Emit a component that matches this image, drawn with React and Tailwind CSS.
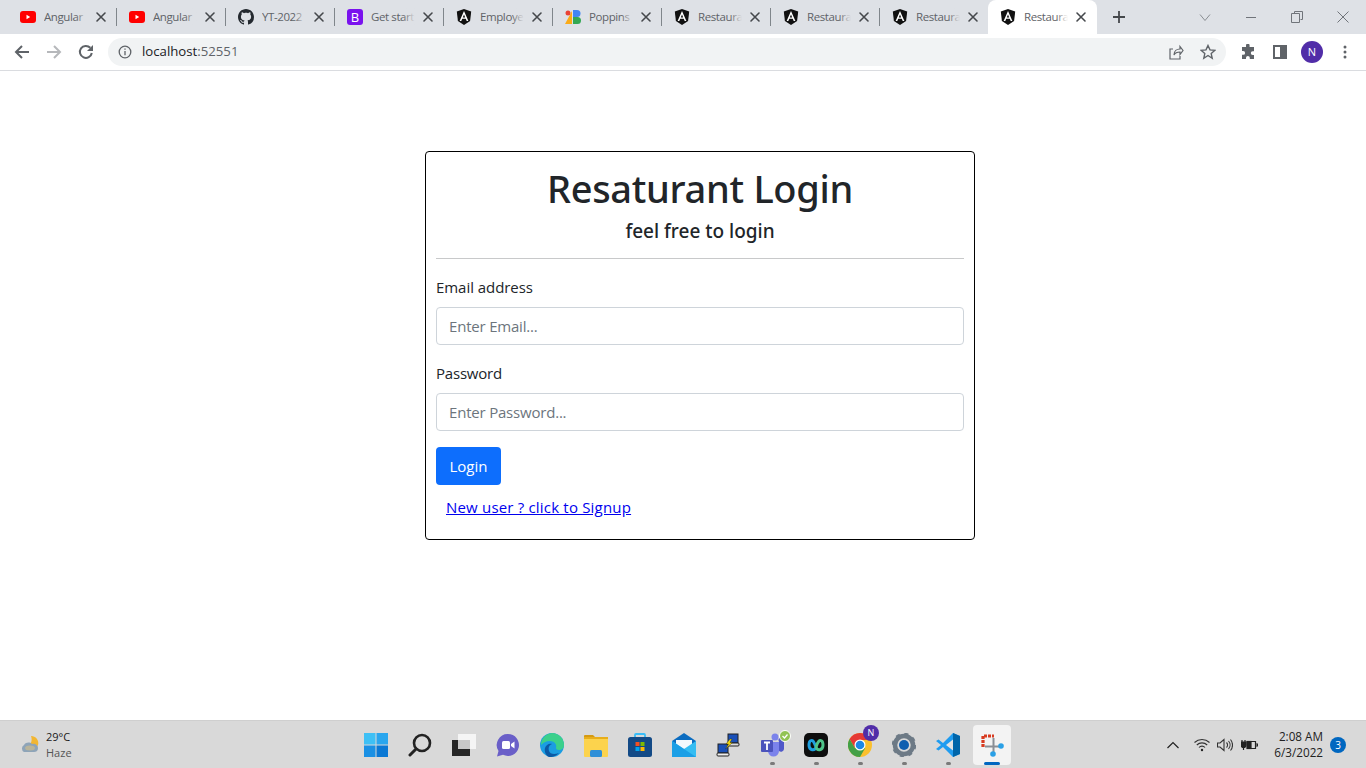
import React from 'react'

const Youtube = () => (
  <svg width="16" height="16" viewBox="0 0 16 16">
    <rect x="0" y="2" width="16" height="12" rx="3" fill="#f00" />
    <path d="M6.5 5.800v4.400L10.200 8z" fill="#fff" />
  </svg>
)

const Github = () => (
  <svg width="16" height="16" viewBox="0 0 16 16" fill="#24292f">
    <path d="M8 0C3.58 0 0 3.58 0 8c0 3.54 2.29 6.53 5.47 7.59.4.07.55-.17.55-.38 0-.19-.01-.82-.01-1.49-2.01.37-2.53-.49-2.69-.94-.09-.23-.48-.94-.82-1.13-.28-.15-.68-.52-.01-.53.63-.01 1.08.58 1.23.82.72 1.21 1.87.87 2.33.66.07-.52.28-.87.51-1.07-1.78-.2-3.64-.89-3.64-3.95 0-.87.31-1.59.82-2.15-.08-.2-.36-1.02.08-2.12 0 0 .67-.21 2.2.82.64-.18 1.32-.27 2-.27s1.36.09 2 .27c1.53-1.04 2.2-.82 2.2-.82.44 1.1.16 1.92.08 2.12.51.56.82 1.27.82 2.15 0 3.07-1.87 3.75-3.65 3.95.29.25.54.73.54 1.48 0 1.07-.01 1.93-.01 2.2 0 .21.15.46.55.38A8.01 8.01 0 0 0 16 8c0-4.42-3.58-8-8-8z" />
  </svg>
)

const Bootstrap = () => (
  <div className="w-4 h-4 rounded-[3px] bg-[#7a12ee] text-white text-[13px] leading-4 text-center">B</div>
)

const Angular = () => (
  <svg width="16" height="16" viewBox="0 0 16 16">
    <path d="M8 0 .8 2.600l1.100 9.500L8 16l6.100-3.900 1.100-9.500z" fill="#111" />
    <path d="M8 2 3.600 12h1.700l.9-2.300h3.600l.9 2.300h1.700zm0 3.600 1.200 2.800H6.800z" fill="#fff" />
  </svg>
)

const Poppins = () => (
  <svg width="16" height="16" viewBox="0 0 16 16">
    <circle cx="3" cy="4" r="2.500" fill="#ea4335" />
    <path d="M7 2v13H0z" fill="#fbab18" />
    <path d="M8 1h4a3.500 3.500 0 0 1 0 7H8z" fill="#4285f4" />
    <path d="M8 8h4.500a3.500 3.500 0 0 1 0 7H8z" fill="#34a853" />
  </svg>
)

const tabs = [
  { icono: <Youtube />, titulo: 'Angular' },
  { icono: <Youtube />, titulo: 'Angular' },
  { icono: <Github />, titulo: 'YT-2022' },
  { icono: <Bootstrap />, titulo: 'Get start' },
  { icono: <Angular />, titulo: 'Employe' },
  { icono: <Poppins />, titulo: 'Poppins' },
  { icono: <Angular />, titulo: 'Restaura' },
  { icono: <Angular />, titulo: 'Restaura' },
  { icono: <Angular />, titulo: 'Restaura' },
  { icono: <Angular />, titulo: 'Restaura', activo: true },
]

const Tab = ({ icono, titulo, activo, ultimo }) => (
  <div className={`relative w-[109px] h-[34px] flex items-center pl-3 ${activo ? 'bg-white rounded-t-lg -ml-px' : ''}`}>
    <div className="w-4 h-4 shrink-0">{icono}</div>
    <div className="relative ml-2 w-[44px] overflow-hidden whitespace-nowrap text-[11.5px] tracking-[-0.4px] text-[#5f6368]">
      {titulo}
      <div className={`absolute top-0 right-0 bottom-0 w-3 bg-gradient-to-r from-transparent ${activo ? 'to-white' : 'to-[#dee1e6]'}`} />
    </div>
    <svg className="ml-[5px]" width="16" height="16" viewBox="0 0 16 16" stroke="#45484c" strokeWidth="1.600" strokeLinecap="round">
      <path d="M4 4l8 8M12 4l-8 8" />
    </svg>
    {!activo && !ultimo && <div className="absolute right-0 top-[8px] w-px h-[18px] bg-[#80868b]" />}
  </div>
)

const TabStrip = () => (
  <div className="h-[34px] bg-[#dee1e6] flex items-center pl-2">
    {tabs.map((tab, i) => (
      <Tab key={i} {...tab} ultimo={i === 8} />
    ))}
    <svg className="ml-[14px]" width="16" height="16" viewBox="0 0 16 16" stroke="#45484c" strokeWidth="1.800">
      <path d="M8 2v12M2 8h12" />
    </svg>
    <div className="ml-auto flex items-center">
      <svg className="mr-[17px]" width="12" height="12" viewBox="0 0 12 12" fill="none" stroke="#8a8e93">
        <path d="M1 3.500l5 6 5-6" />
      </svg>
      <div className="w-[46px] flex justify-center">
        <div className="w-[10px] h-px bg-[#70747a]" />
      </div>
      <div className="w-[46px] flex justify-center">
        <svg width="12" height="12" viewBox="0 0 12 12" fill="none" stroke="#70747a">
          <path d="M3.500 2.500V.5h8v8h-2M.5 2.500h8v9h-8z" />
        </svg>
      </div>
      <div className="w-[46px] flex justify-center">
        <svg width="12" height="12" viewBox="0 0 12 12" stroke="#70747a">
          <path d="M.5.5l11 11M11.500.5l-11 11" />
        </svg>
      </div>
    </div>
  </div>
)

const Toolbar = () => (
  <div className="h-[37px] bg-white border-b border-[#dadce0] flex items-center pb-px">
    <div className="w-[108px] flex items-center">
      <div className="w-11 pl-[14px]">
        <svg width="16" height="16" viewBox="0 0 16 16" fill="none" stroke="#5f6368" strokeWidth="2">
          <path d="M15 8H2M8 2 2 8l6 6" />
        </svg>
      </div>
      <div className="w-[34px] pl-[2px]">
        <svg width="16" height="16" viewBox="0 0 16 16" fill="none" stroke="#b6b8bb" strokeWidth="2">
          <path d="M1 8h13M8 2l6 6-6 6" />
        </svg>
      </div>
      <div className="w-[30px]">
        <svg width="16" height="16" viewBox="0 0 16 16" fill="none" stroke="#5f6368" strokeWidth="2">
          <path d="M13.800 9A6 6 0 1 1 12.300 3.800" />
          <path d="M15 1v6H9z" fill="#5f6368" stroke="none" />
        </svg>
      </div>
    </div>
    <div className="w-[1118px] h-7 rounded-full bg-[#f1f3f4] flex items-center pl-[10px] pr-[10px]">
      <svg width="14" height="14" viewBox="0 0 14 14" fill="none" stroke="#5f6368" strokeWidth="1.300">
        <circle cx="7" cy="7" r="5.800" />
        <path d="M7 6v4.200M7 3.600v1.200" />
      </svg>
      <span className="ml-[10px] mt-px text-[13.2px] text-[#202124]">
        localhost<span className="text-[#5f6368]">:52551</span>
      </span>
      <div className="ml-auto flex items-center gap-[16px]">
        <svg width="16" height="16" viewBox="0 0 16 16" fill="none" stroke="#5f6368" strokeWidth="1.200">
          <path d="M5 5H2v10h10v-3M6 11c0-4 3-6 6-6V2.500l3 4-3 4V8c-3 0-5 1-6 3z" />
        </svg>
        <svg width="16" height="16" viewBox="0 0 16 16" fill="none" stroke="#5f6368" strokeWidth="1.400">
          <path d="M8 1.500l2 4.400 4.700.5-3.500 3.200 1 4.700L8 11.500l-4.200 2.800 1-4.700L1.300 6.400 6 5.900z" />
        </svg>
      </div>
    </div>
    <div className="flex items-center ml-[14px]">
      <svg width="16" height="16" viewBox="0 0 16 16" fill="#5f6368">
        <path d="M6 1.500a1.800 1.800 0 0 1 3.600 0V3H14v4.200h-1.300a1.900 1.900 0 0 0 0 3.800H14v4H9.800v-1.200a1.900 1.900 0 0 0-3.800 0V15H2v-4.200h1.200a1.900 1.900 0 0 0 0-3.800H2V3h4z" />
      </svg>
      <svg className="ml-4" width="16" height="16" viewBox="0 0 16 16" fill="none" stroke="#5f6368" strokeWidth="2">
        <rect x="2" y="2" width="12" height="12" />
        <rect x="9" y="2" width="5" height="12" fill="#5f6368" />
      </svg>
      <div className="ml-[13px] w-[22px] h-[22px] rounded-full bg-[#512da8] text-white text-[11px] leading-[22px] text-center">N</div>
      <svg className="ml-[20px]" width="4" height="14" viewBox="0 0 4 14" fill="#5f6368">
        <circle cx="2" cy="2" r="1.500" />
        <circle cx="2" cy="7" r="1.500" />
        <circle cx="2" cy="12" r="1.500" />
      </svg>
    </div>
  </div>
)

const LoginCard = () => (
  <div className="w-[550px] h-[389px] ml-[425px] mt-[80px] border border-black rounded-[4px] px-[10px] pt-3 font-['Open_Sans','Noto_Sans',sans-serif] text-[#212529]">
    <h1 className="text-[38px] leading-[48px] font-medium font-['Noto_Sans',sans-serif] tracking-[-0.3px] text-center">Resaturant Login</h1>
    <h5 className="mt-[7px] text-[19px] leading-6 font-medium font-['Noto_Sans',sans-serif] text-center">feel free to login</h5>
    <hr className="mt-[15px] border-t border-[#c8c9ca]" />
    <form onSubmit={(e) => e.preventDefault()} className="mt-4">
      <label className="block text-[15px] leading-6 tracking-[-0.05px] mb-2">Email address</label>
      <input
        type="text"
        placeholder="Enter Email..."
        className="block w-full h-[38px] px-3 border border-[#ced4da] rounded-[4px] text-[15px] tracking-[-0.2px] placeholder:text-[#6c757d] mb-4"
      />
      <label className="block text-[15px] leading-6 tracking-[-0.2px] mb-2">Password</label>
      <input
        type="password"
        placeholder="Enter Password..."
        className="block w-full h-[38px] px-3 border border-[#ced4da] rounded-[4px] text-[15px] tracking-[-0.2px] placeholder:text-[#6c757d] mb-4"
      />
      <button type="submit" className="block w-[65px] h-[38px] bg-[#0d6efd] text-white rounded-[4px] text-[15px]">
        Login
      </button>
      <a href="#signup" className="block mt-[10px] ml-[10px] text-[15px] leading-6 tracking-[0.19px] text-[#0000ee] underline">
        New user ? click to Signup
      </a>
    </form>
  </div>
)

const Windows = () => (
  <svg width="24" height="24" viewBox="0 0 24 24">
    <rect x="0" y="0" width="11.500" height="11.500" fill="#3ec0f5" />
    <rect x="12.500" y="0" width="11.500" height="11.500" fill="#2aa6ee" />
    <rect x="0" y="12.500" width="11.500" height="11.500" fill="#1a90e4" />
    <rect x="12.500" y="12.500" width="11.500" height="11.500" fill="#0b78d4" />
  </svg>
)

const Search = () => (
  <svg width="24" height="24" viewBox="0 0 24 24" fill="none" stroke="#222">
    <circle cx="14" cy="10" r="8" strokeWidth="2.600" />
    <path d="M8 16l-6 6" strokeWidth="3" strokeLinecap="round" />
  </svg>
)

const TaskView = () => (
  <svg width="24" height="24" viewBox="0 0 24 24">
    <rect x="6" y="1" width="18" height="15" fill="#f5f5f5" />
    <rect x="0" y="7" width="18" height="16" fill="#262626" />
    <rect x="6" y="7" width="12" height="9" fill="#c8c8c8" />
  </svg>
)

const Chat = () => (
  <svg width="24" height="24" viewBox="0 0 24 24">
    <path d="M12 1a11 11 0 1 1-5 20.800L1 23.500l1.500-5.500A11 11 0 0 1 12 1z" fill="#6a5fc8" />
    <rect x="6" y="8" width="8" height="8" rx="1.500" fill="#fff" />
    <path d="M15 11l3.500-2.500v7L15 13z" fill="#fff" />
  </svg>
)

const Edge = () => (
  <svg width="24" height="24" viewBox="0 0 24 24">
    <circle cx="12" cy="12" r="12" fill="#1b9de2" />
    <path d="M12 0a12 12 0 0 1 12 12c0 3-2 5-5 5-2 0-3-1-3-2 1-3-1-7-6-7-4 0-7 2-9 4A12 12 0 0 1 12 0z" fill="#3bd08b" />
    <path d="M9 24c-3-1-5-5-4-9 1-3 4-5 7-4-3 1-4 4-3 7s5 4 10 2a12 12 0 0 1-10 4z" fill="#0c59a4" />
  </svg>
)

const Files = () => (
  <svg width="24" height="24" viewBox="0 0 24 24">
    <path d="M0 3a1 1 0 0 1 1-1h8l2 2h-11z" fill="#d59a12" />
    <rect x="0" y="4" width="24" height="20" rx="1" fill="#fcd34d" />
    <rect x="0" y="4" width="24" height="2" fill="#e8ae1b" />
    <rect x="6" y="17" width="12" height="7" rx="1.500" fill="#2f8fd8" />
  </svg>
)

const Store = () => (
  <svg width="24" height="24" viewBox="0 0 24 24">
    <path d="M7 5V2a1 1 0 0 1 1-1h8a1 1 0 0 1 1 1v3" fill="none" stroke="#38bdf8" strokeWidth="1.800" />
    <rect x="0" y="4" width="24" height="20" rx="2.500" fill="#134a86" />
    <rect x="7.500" y="9" width="4" height="4" fill="#f25022" />
    <rect x="12.500" y="9" width="4" height="4" fill="#7fba00" />
    <rect x="7.500" y="14" width="4" height="4" fill="#00a4ef" />
    <rect x="12.500" y="14" width="4" height="4" fill="#ffb900" />
  </svg>
)

const Mail = () => (
  <svg width="24" height="24" viewBox="0 0 24 24">
    <path d="M0 8 12 0l12 8v14H0z" fill="#0b6cc0" />
    <path d="M4 7h16v7l-8 5-8-5z" fill="#f4f9fd" />
    <path d="M0 8l12 8 12-8v16H0z" fill="#35bdf2" />
    <path d="M0 24V8l12 8 12 8z" fill="#1b9fe6" />
  </svg>
)

const Remote = () => (
  <svg width="24" height="24" viewBox="0 0 24 24">
    <rect x="12" y="1" width="10" height="9" fill="#1a50b8" stroke="#222" />
    <rect x="11" y="10" width="12" height="3" rx="1" fill="#ddd" stroke="#222" />
    <rect x="2" y="11" width="10" height="9" fill="#1a50b8" stroke="#222" />
    <rect x="1" y="20" width="12" height="3" rx="1" fill="#eee" stroke="#222" />
    <path d="M14 6l-4 5h2.500l-3 5 7-6.500h-2.500l2-3.500z" fill="#f5d90a" stroke="#222" strokeWidth=".4" />
  </svg>
)

const Teams = () => (
  <div className="relative">
    <svg width="24" height="24" viewBox="0 0 24 24">
      <circle cx="15" cy="4" r="3.500" fill="#7b83eb" />
      <circle cx="21" cy="7" r="2.500" fill="#5059c9" />
      <path d="M8 9h11v9a5.500 5.500 0 0 1-11 0z" fill="#7b83eb" />
      <path d="M19 9h5v7a3 3 0 0 1-5 2z" fill="#5059c9" />
      <rect x="1" y="7" width="12" height="12" rx="1" fill="#4b53bc" />
      <path d="M4 9.500h6M7 9.500V17" stroke="#fff" strokeWidth="1.800" />
    </svg>
    <svg className="absolute -top-[3px] -right-[7px]" width="12" height="12" viewBox="0 0 12 12">
      <circle cx="6" cy="6" r="5.500" fill="#92c353" stroke="#fff" />
      <path d="M3.500 6l2 2 3-3.500" fill="none" stroke="#fff" strokeWidth="1.300" />
    </svg>
  </div>
)

const Webex = () => (
  <svg width="24" height="24" viewBox="0 0 24 24">
    <rect x="0" y="0" width="24" height="24" rx="5" fill="#0e0e0e" />
    <path d="M12 14c-1 4-7 4-7-2 0-5 3-5 4-4s2 4 3 6" fill="none" stroke="#1f9fe0" strokeWidth="3" />
    <path d="M12 14c1 4 7 4 7-2 0-5-3-5-4-4s-2 3-3 6" fill="none" stroke="#4fc48a" strokeWidth="3" />
  </svg>
)

const Chrome = () => (
  <div className="relative">
    <svg width="24" height="24" viewBox="0 0 24 24">
      <circle cx="12" cy="12" r="12" fill="#fbc02d" />
      <path d="M12 0a12 12 0 0 0-10.400 6l5.200 9L12 7h10.400A12 12 0 0 0 12 0z" fill="#e53935" />
      <path d="M1.600 6A12 12 0 0 0 12 24l5.200-9-10.400 0z" fill="#43a047" />
      <circle cx="12" cy="12" r="5.500" fill="#fff" />
      <circle cx="12" cy="12" r="4.300" fill="#1e88e5" />
    </svg>
    <div className="absolute -top-[8px] -right-[7px] w-4 h-4 rounded-full bg-[#512da8] text-white text-[9px] leading-4 text-center">N</div>
  </div>
)

const Settings = () => (
  <svg width="24" height="24" viewBox="0 0 24 24">
    <circle cx="12" cy="12" r="9" fill="none" stroke="#6d7a86" strokeWidth="4.500" />
    <circle cx="12" cy="12" r="11" fill="none" stroke="#6d7a86" strokeWidth="2.500" strokeDasharray="4 4.640" />
    <circle cx="12" cy="12" r="5" fill="#0f5fb0" />
  </svg>
)

const VsCode = () => (
  <svg width="24" height="24" viewBox="0 0 24 24">
    <path d="M17 0 7 10 2.500 6.500 0 8l5 4-5 4 2.500 1.500L7 14l10 10 7-3V3z" fill="#1f9cf0" />
    <path d="M17 6.500 10 12l7 5.500z" fill="#e4e4e4" />
    <path d="M17 0l7 3v18l-7 3z" fill="#0065a9" />
  </svg>
)

const Snip = () => (
  <svg width="24" height="24" viewBox="0 0 24 24">
    <path d="M3 14V3h11" fill="none" stroke="#d83b20" strokeWidth="3.200" strokeDasharray="3 1" />
    <path d="M13.500 5v16M5 13.500h16" fill="none" stroke="#8a8f96" strokeWidth="2" />
    <circle cx="21" cy="13" r="2.800" fill="#2aa0e6" />
    <circle cx="13" cy="21" r="2.800" fill="#2aa0e6" />
  </svg>
)

const apps = [
  { icono: <Windows /> },
  { icono: <Search /> },
  { icono: <TaskView /> },
  { icono: <Chat /> },
  { icono: <Edge /> },
  { icono: <Files /> },
  { icono: <Store /> },
  { icono: <Mail /> },
  { icono: <Remote /> },
  { icono: <Teams />, abierto: true },
  { icono: <Webex />, abierto: true },
  { icono: <Chrome />, abierto: true },
  { icono: <Settings />, abierto: true },
  { icono: <VsCode />, abierto: true },
  { icono: <Snip />, activo: true },
]

const Taskbar = () => (
  <div className="h-[48px] bg-[#d9d9d9] border-t border-[#cfcfcf] flex items-center font-['Open_Sans',sans-serif] text-[#1a1a1a]">
    <div className="w-[354px] flex items-center pl-[20px]">
      <svg width="19" height="19" viewBox="0 0 19 19">
        <path d="M11 1a7 7 0 0 1 7 9l-1 2H7c3-1 6-6 4-11z" fill="#f2b632" />
        <path d="M4 17a4 4 0 0 1 0-7c2-3 6-3 8-1 3-1 6 1 6 4s-2 4-4 4z" fill="#8ea4b8" />
        <ellipse cx="10" cy="13" rx="5" ry="2.500" fill="#b9b49a" />
      </svg>
      <div className="ml-[7px] text-[11px] leading-[16px]">
        <div>29°C</div>
        <div className="text-[#555]">Haze</div>
      </div>
    </div>
    <div className="w-[660px] flex">
      {apps.map((app, i) => (
        <div
          key={i}
          className={`relative h-[40px] flex items-center justify-center ${app.activo ? 'w-[38px] bg-[#f3f3f3] rounded-[4px] mx-[3px]' : 'w-11'}`}
        >
          {app.icono}
          {app.abierto && <div className="absolute bottom-0 w-[5px] h-[3px] rounded-full bg-[#7a7a7a]" />}
          {app.activo && <div className="absolute bottom-0 w-4 h-[3px] rounded-full bg-[#0067c0]" />}
        </div>
      ))}
    </div>
    <div className="flex-1 flex items-center">
      <svg className="ml-[153px]" width="12" height="8" viewBox="0 0 12 8" fill="none" stroke="#222" strokeWidth="1.200">
        <path d="M.5 7 6 1.500 11.500 7" />
      </svg>
      <svg className="ml-[15px]" width="16" height="14" viewBox="0 0 16 14" fill="none" stroke="#333" strokeWidth="1.100">
        <path d="M.5 4.500a11 11 0 0 1 15 0M2.800 7a7.500 7.500 0 0 1 10.400 0M5 9.500a4 4 0 0 1 6 0" />
        <circle cx="8" cy="12" r="1.200" fill="#222" stroke="none" />
      </svg>
      <svg className="ml-[7px]" width="16" height="14" viewBox="0 0 16 14" fill="none" stroke="#333" strokeWidth="1.100">
        <path d="M.5 5v4h2.500L7 12.500v-11L3 5zM9.500 4.500a3.500 3.500 0 0 1 0 5M11.500 3a6 6 0 0 1 0 8M13.500 1.500a8.500 8.500 0 0 1 0 11" />
      </svg>
      <svg className="ml-[8px]" width="17" height="14" viewBox="0 0 17 14" fill="none" stroke="#222" strokeWidth="1.200">
        <path d="M6 3.500h8.500v7H6M14.500 6h2v2h-2" />
        <path d="M1 2v2M4 2v2" />
        <path d="M0 4h5v3a2.500 2.500 0 0 1-5 0zM2.500 9.500V12" fill="#222" />
        <rect x="6" y="3.500" width="4" height="7" fill="#222" />
      </svg>
      <div className="ml-[11px] w-[54px] -mt-[1px] text-right text-[11.7px] leading-[16px] text-[#222] whitespace-nowrap">
        <div>2:08 AM</div>
        <div>6/3/2022</div>
      </div>
      <div className="ml-[7px] w-4 h-4 rounded-full bg-[#0067c0] text-white text-[10px] leading-4 text-center">3</div>
    </div>
  </div>
)

const App = () => {
  return (
    <div className="w-[1366px] h-[768px] overflow-hidden flex flex-col bg-white font-['Open_Sans',sans-serif]">
      <TabStrip />
      <Toolbar />
      <div className="flex-1">
        <LoginCard />
      </div>
      <Taskbar />
    </div>
  )
}

export default App
